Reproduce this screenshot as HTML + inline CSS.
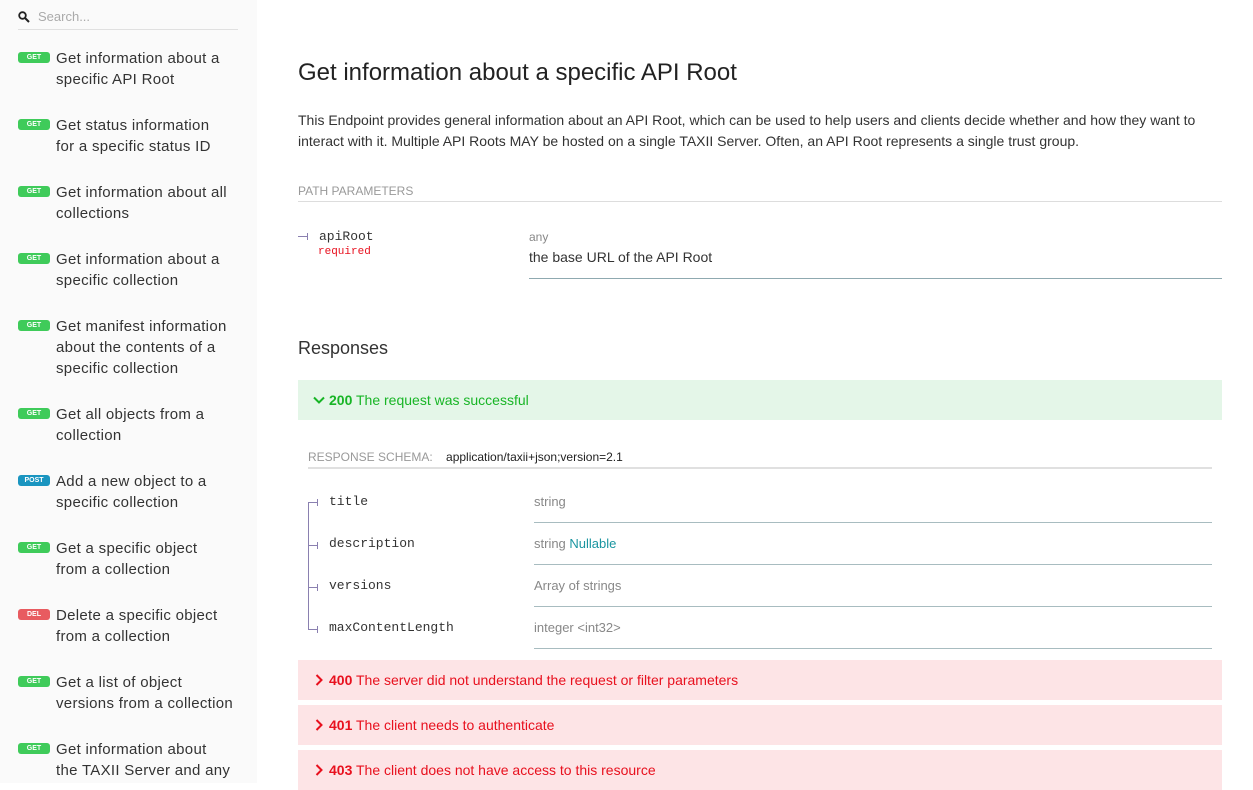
<!DOCTYPE html>
<html><head><meta charset="utf-8"><style>
*{margin:0;padding:0;box-sizing:border-box}
body{width:1253px;height:783px;overflow:hidden;background:#fff;font-family:"Liberation Sans",sans-serif;position:relative}
.side{position:absolute;left:0;top:0;width:257px;height:783px;background:#fafafa}
.search{position:absolute;left:18px;top:3px;width:220px;height:27px;border-bottom:1px solid #e0e0e0;font-size:13px;color:#aaa}
.search span{position:absolute;left:20px;top:6px}
.item{position:absolute;left:18px;width:230px;font-size:15px;line-height:21px;color:#333}
.item .t{position:absolute;left:38px;top:1px;white-space:nowrap;letter-spacing:0.3px}
.b{position:absolute;left:0;top:5px;width:32px;height:11px;border-radius:3px;background:#3fcb5a;color:#fff;font-size:7px;font-weight:bold;text-align:center;line-height:11px}
.post{background:#1a95c0}.del{background:#e85b60}
.main{position:absolute;left:298px;top:0;width:924px}
h1{position:absolute;top:59px;font-size:24px;font-weight:normal;color:#222}
.p{position:absolute;top:110px;font-size:14px;line-height:21px;color:#333;width:924px}
.ph{position:absolute;top:184px;width:924px;font-size:12px;color:#999;border-bottom:1px solid #ddd;padding-bottom:3px}
.mono{font-family:"Liberation Mono",monospace}
.resp{position:absolute;left:0;width:924px;height:40px;font-size:14px;line-height:40px;padding-left:31px}
.resp svg{position:absolute;left:15px;top:14px}
.ok{background:#e4f6e8;color:#18b526}
.err{background:#fde4e6;color:#e8101e}
.row{position:absolute;left:236px;width:678px;border-bottom:1px solid #a8bcc0;font-size:13px;color:#888}
.nm{position:absolute;left:31px;font-size:13px;color:#333}
.tk{position:absolute;left:10px;width:10px;height:1px;background:#8a80b0}
.tk:after{content:"";position:absolute;right:0;top:-3px;width:1px;height:7px;background:#8a80b0}
</style></head><body>
<div class="side">
<div class="search"><svg style="position:absolute;left:0;top:8px" width="12" height="12" viewBox="0 0 12 12"><circle cx="4.5" cy="4.5" r="3.3" fill="none" stroke="#222" stroke-width="1.8"/><path d="M7 7l4 4" stroke="#222" stroke-width="2"/></svg><span>Search...</span></div>
<div class="item" style="top:47px"><div class="b">GET</div><div class="t">Get information about a<br>specific API Root</div></div>
<div class="item" style="top:114px"><div class="b">GET</div><div class="t">Get status information<br>for a specific status ID</div></div>
<div class="item" style="top:181px"><div class="b">GET</div><div class="t">Get information about all<br>collections</div></div>
<div class="item" style="top:248px"><div class="b">GET</div><div class="t">Get information about a<br>specific collection</div></div>
<div class="item" style="top:315px"><div class="b">GET</div><div class="t">Get manifest information<br>about the contents of a<br>specific collection</div></div>
<div class="item" style="top:403px"><div class="b">GET</div><div class="t">Get all objects from a<br>collection</div></div>
<div class="item" style="top:470px"><div class="b post">POST</div><div class="t">Add a new object to a<br>specific collection</div></div>
<div class="item" style="top:537px"><div class="b">GET</div><div class="t">Get a specific object<br>from a collection</div></div>
<div class="item" style="top:604px"><div class="b del">DEL</div><div class="t">Delete a specific object<br>from a collection</div></div>
<div class="item" style="top:671px"><div class="b">GET</div><div class="t">Get a list of object<br>versions from a collection</div></div>
<div class="item" style="top:738px"><div class="b">GET</div><div class="t">Get information about<br>the TAXII Server and any</div></div>
</div>
<div class="main">
<h1>Get information about a specific API Root</h1>
<div class="p">This Endpoint provides general information about an API Root, which can be used to help users and clients decide whether and how they want to interact with it. Multiple API Roots MAY be hosted on a single TAXII Server. Often, an API Root represents a single trust group.</div>
<div class="ph">PATH PARAMETERS</div>
<div class="tk" style="left:0;top:236px"></div>
<div class="mono" style="position:absolute;top:229px;left:21px;font-size:13px;color:#333">apiRoot</div>
<div class="mono" style="position:absolute;top:246px;left:20px;font-size:11px;color:#e8101e">required</div>
<div style="position:absolute;left:231px;top:230px;width:693px;height:49px;border-bottom:1px solid #8fa9b0">
<div style="font-size:12px;color:#888">any</div><div style="font-size:14px;color:#333;margin-top:5px">the base URL of the API Root</div></div>
<div style="position:absolute;top:338px;font-size:18px;color:#333">Responses</div>
<div class="resp ok" style="top:380px"><svg width="12" height="12" viewBox="0 0 12 12"><path d="M1 3.5l5 5 5-5" fill="none" stroke="#18b526" stroke-width="2"/></svg><b>200</b> The request was successful</div>
<div style="position:absolute;left:10px;top:450px;width:904px;border-bottom:2px solid #e0e0e0;font-size:12px;color:#999;padding-bottom:3px">RESPONSE SCHEMA: <span style="color:#222;margin-left:10px">application/taxii+json;version=2.1</span></div>
<div style="position:absolute;left:10px;top:502px;width:1px;height:127px;background:#8a80b0"></div>
<div class="tk" style="top:502px"></div>
<div class="tk" style="top:545px"></div>
<div class="tk" style="top:587px"></div>
<div class="tk" style="top:629px"></div>
<div class="nm mono" style="top:494px">title</div>
<div class="nm mono" style="top:536px">description</div>
<div class="nm mono" style="top:578px">versions</div>
<div class="nm mono" style="top:620px">maxContentLength</div>
<div class="row" style="top:494px;height:29px">string</div>
<div class="row" style="top:536px;height:29px">string <span style="color:#1a95a0">Nullable</span></div>
<div class="row" style="top:578px;height:29px">Array of strings</div>
<div class="row" style="top:620px;height:29px">integer &lt;int32&gt;</div>
<div class="resp err" style="top:660px"><svg width="12" height="12" viewBox="0 0 12 12"><path d="M3.5 1l5 5-5 5" fill="none" stroke="#e8101e" stroke-width="2"/></svg><b>400</b> The server did not understand the request or filter parameters</div>
<div class="resp err" style="top:705px"><svg width="12" height="12" viewBox="0 0 12 12"><path d="M3.5 1l5 5-5 5" fill="none" stroke="#e8101e" stroke-width="2"/></svg><b>401</b> The client needs to authenticate</div>
<div class="resp err" style="top:750px"><svg width="12" height="12" viewBox="0 0 12 12"><path d="M3.5 1l5 5-5 5" fill="none" stroke="#e8101e" stroke-width="2"/></svg><b>403</b> The client does not have access to this resource</div>
</div>
</body></html>
